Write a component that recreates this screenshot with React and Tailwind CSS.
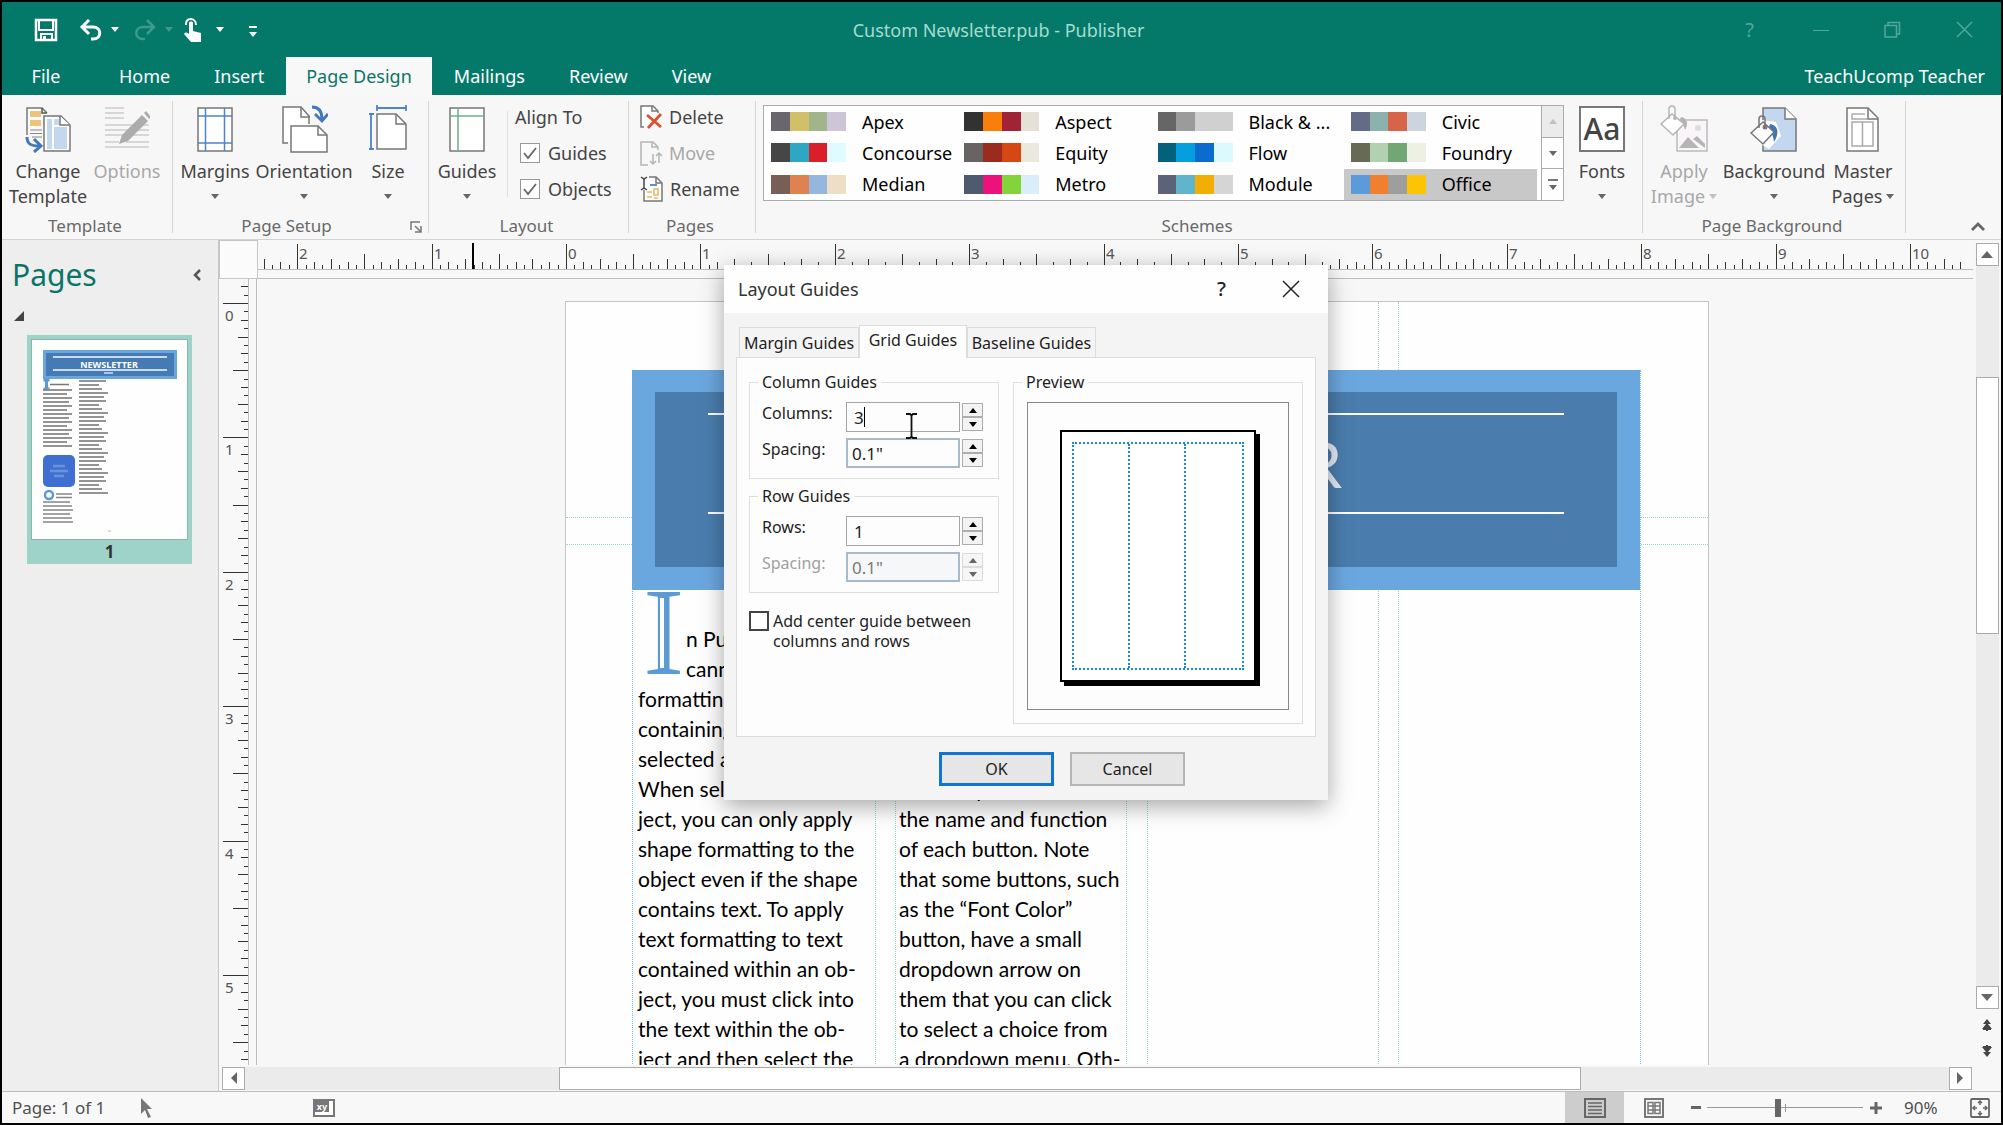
import React, { useState } from "react";
import clsx from "clsx";

const tabs = ["Home", "Insert", "Page Design", "Mailings", "Review", "View"];

const schemes = [
  { name: "Apex", colors: ["#69676d", "#d1c069", "#a2b489", "#cec5d8"] },
  { name: "Aspect", colors: ["#323232", "#f97f0a", "#a12436", "#e6e1d6"] },
  { name: "Black & ...", colors: ["#666666", "#9b9b9b", "#d0d0d0", "#d0d0d0"] },
  { name: "Civic", colors: ["#646b86", "#8cb2ae", "#d56448", "#ccd4df"] },
  { name: "Concourse", colors: ["#464646", "#2da7c4", "#da1f2b", "#defbff"] },
  { name: "Equity", colors: ["#696464", "#9a2b1e", "#d54816", "#ebe8de"] },
  { name: "Flow", colors: ["#04617b", "#049fdf", "#0c6bce", "#dcfafd"] },
  { name: "Foundry", colors: ["#676a55", "#b1d1b1", "#72a674", "#eef0e4"] },
  { name: "Median", colors: ["#775f55", "#e08250", "#94b6df", "#ecdfc6"] },
  { name: "Metro", colors: ["#4e5b6f", "#ed127b", "#82d43a", "#daeef9"] },
  { name: "Module", colors: ["#5a6378", "#60b5cd", "#f2ae05", "#d5d5d5"] },
  { name: "Office", colors: ["#5b9bd9", "#f08030", "#9e9e9e", "#fcc404"] },
];

const columnOne = [
  "formatting to",
  "containing all",
  "selected and",
  "When select an ob-",
  "ject, you can only apply",
  "shape formatting to the",
  "object even if the shape",
  "contains text. To apply",
  "text formatting to text",
  "contained within an ob-",
  "ject, you must click into",
  "the text within the ob-",
  "ject and then select the",
];

const columnTwo = [
  "ScreenTip with",
  "the name and function",
  "of each button. Note",
  "that some buttons, such",
  "as the “Font Color”",
  "button, have a small",
  "dropdown arrow on",
  "them that you can click",
  "to select a choice from",
  "a dropdown menu. Oth-",
];

function Caret({ className }) {
  return (
    <svg viewBox="0 0 8 5" className={clsx("w-2 h-[5px] shrink-0", className)}>
      <path d="M0 0H8L4 5Z" fill="currentColor" />
    </svg>
  );
}

function Svg({ w, h, children, className }) {
  return (
    <svg
      width={w}
      height={h}
      viewBox={`0 0 ${w} ${h}`}
      fill="none"
      className={clsx("shrink-0", className)}
    >
      {children}
    </svg>
  );
}

/* Ribbon icons */

const ChangeTemplateIcon = () => (
  <Svg w={46} h={48}>
    <path d="M2 30V3h15l5 5" stroke="#777" strokeWidth="1.5" fill="#fff" />
    <path d="M17 3v5h5" stroke="#555" strokeWidth="1.5" />
    <path d="M5 6h11v6H5zM5 15h11v6H5z" fill="#eec27c" />
    <path d="M5 25h12M5 28.500h12M7 32h10" stroke="#888" strokeWidth="1.2" />
    <path d="M19 11h17l9 9v26H19z" fill="#fff" stroke="#777" strokeWidth="1.5" />
    <path d="M22 14h5v30h-5z" fill="#c3d7ee" />
    <path d="M29 14h5v6h-5zM29 22h13v22H29z" fill="#c3d7ee" />
    <path d="M35 11v9h10" fill="#fff" stroke="#777" strokeWidth="1.500" />
    <path d="M2 32c0 7 4 9 12 9M9 34l7 7-7 6" stroke="#4478bd" strokeWidth="3" />
  </Svg>
);

const OptionsIcon = () => (
  <Svg w={46} h={48}>
    <path
      d="M1 3h19M1 8h19M1 13h19M1 20h28M33 20h12M1 25h23M30 25h15M1 30h18M26 30h19M1 37h14M22 37h23M1 42h44"
      stroke="#ccc"
      strokeWidth="1.5"
    />
    <path d="M15 39l3-9 20-20 6 6-20 20z" fill="#acacac" />
    <path d="M40 8l2-2 5 6-2 2z" fill="#acacac" />
  </Svg>
);

const MarginsIcon = () => (
  <Svg w={38} h={48}>
    <rect x="2" y="3" width="34" height="43" fill="#fff" stroke="#777" strokeWidth="1.5" />
    <path d="M9.500 3v43M28.500 3v43M2 11h34M2 38h34" stroke="#4d84c9" strokeWidth="1.500" />
  </Svg>
);

const OrientationIcon = () => (
  <Svg w={48} h={48}>
    <path d="M8 38H3V2h18l8 9v8" fill="#fff" stroke="#777" strokeWidth="1.5" />
    <path d="M21 2v10h9" stroke="#777" strokeWidth="1.5" />
    <path d="M11 21h27l9 9v17H11z" fill="#fff" stroke="#777" strokeWidth="1.5" />
    <path d="M38 21v9h9" stroke="#777" strokeWidth="1.5" />
    <path d="M32 2c7 0 10 4 10 12M35 9l7 7 6-7" stroke="#4478bd" strokeWidth="2.800" />
  </Svg>
);

const SizeIcon = () => (
  <Svg w={40} h={48}>
    <path d="M9 9h19l10 10v25H9z" fill="#fff" stroke="#777" strokeWidth="1.500" />
    <path d="M28 9v10h10" stroke="#777" strokeWidth="1.5" />
    <path d="M9 3h29M9 0v6M38 0v6M3 9v35M1 9h5M1 44h5" stroke="#4d84c9" strokeWidth="1.800" />
  </Svg>
);

const GuidesIcon = () => (
  <Svg w={38} h={48}>
    <rect x="2" y="3" width="34" height="43" fill="#fff" stroke="#777" strokeWidth="1.5" />
    <path d="M10 3v43M2 11h34" stroke="#6fae8d" strokeWidth="1.5" />
  </Svg>
);

const FontsIcon = () => (
  <span className="w-[46px] h-[46px] border-2 border-[#777] bg-white flex items-center justify-center text-[30px] leading-none font-medium text-[#444]">
    Aa
  </span>
);

const ApplyImageIcon = () => (
  <Svg w={48} h={48}>
    <rect x="17" y="15" width="30" height="31" fill="#f9f5f9" stroke="#bbb" strokeWidth="1.5" />
    <path d="M19 43l9-11 11 11zM33 34l4-3 8 8v4z" fill="#b5b5b5" />
    <circle cx="38" cy="23" r="3" fill="#ddd" />
    <path d="M21 12c6 1 8 7 4 13-1-4-2-6-6-8z" fill="#b5b5b5" />
    <path d="M1 19L12 9l12 10-11 11z" fill="#fff" stroke="#b5b5b5" strokeWidth="1.500" />
    <path d="M9 14V4c0-4 6-4 6 0v8" stroke="#b5b5b5" strokeWidth="1.5" />
    <circle cx="15" cy="13" r="2" fill="#b5b5b5" />
  </Svg>
);

const BackgroundIcon = () => (
  <Svg w={48} h={48}>
    <path d="M13 3h22l11 11v32H13z" fill="#c3d7ee" stroke="#777" strokeWidth="1.5" />
    <path d="M35 3v11h11" fill="#fff" stroke="#777" strokeWidth="1.5" />
    <path d="M12 15l14 2 5 14-12 13-10-6z" fill="#fff" />
    <path d="M20 19c8 1 10 9 4 18-1-7-2-10-6-12z" fill="#3f74b9" />
    <path d="M1 28l12-11 11 10-11 12z" fill="#fff" stroke="#777" strokeWidth="1.5" />
    <path d="M9 23v-9c0-4 6-4 6 0v8" stroke="#777" strokeWidth="1.5" />
    <circle cx="15" cy="22" r="2.500" fill="#777" />
  </Svg>
);

const MasterPagesIcon = () => (
  <Svg w={36} h={48}>
    <path d="M2 3h21l10 10v33H2z" fill="#fff" stroke="#777" strokeWidth="1.5" />
    <path d="M23 3v11h10" stroke="#777" strokeWidth="1.5" />
    <path d="M7 9h13M7 9v5h16M7 17h21v24H7zM17.500 17v24" stroke="#aaa" strokeWidth="1.500" />
  </Svg>
);

const DeleteIcon = () => (
  <Svg w={23} h={26}>
    <path d="M4 23H1V2h12l5 5v2" fill="#fff" stroke="#777" strokeWidth="1.5" />
    <path d="M12 2v5h6" stroke="#777" strokeWidth="1.5" />
    <path d="M7 11l14 12M21 10L8 24" stroke="#d8532f" strokeWidth="2.800" />
  </Svg>
);

const MoveIcon = () => (
  <Svg w={23} h={26}>
    <path d="M8 25H1V2h12l5 5v3" stroke="#b5b5b5" strokeWidth="1.5" />
    <path d="M12 2v5h6M13 14v10M10 21l3 3 3-3M19 23V13M16 16l3-3 3 3" stroke="#b5b5b5" strokeWidth="1.500" />
  </Svg>
);

const RenameIcon = () => (
  <Svg w={24} h={26}>
    <path d="M4 14v11h18V7l-6-6H9" fill="#fff" stroke="#777" strokeWidth="1.5" />
    <path d="M16 1v6h6" stroke="#777" strokeWidth="1.5" />
    <path d="M1 1l3 2 3-2M4 3v9M1 14l3-2 3 2" stroke="#444" strokeWidth="1.500" />
    <path d="M10 9h7" stroke="#4d84c9" strokeWidth="1.8" />
    <path d="M7 16h5M14 13h4v6h-4zM7 21h5M14 22h4" stroke="#e9b566" strokeWidth="1.500" />
  </Svg>
);

function BigButton({ icon, label, second, caret, disabled, className }) {
  return (
    <button
      disabled={disabled}
      className={clsx(
        "flex flex-col items-center shrink-0 text-[18px] leading-[25px]",
        disabled ? "text-[#a8a8a8]" : "text-[#444]",
        className
      )}
    >
      <span className="h-12 mb-1.5 flex items-center">{icon}</span>
      <span>{label}</span>
      <span className="h-[25px] flex items-center gap-1">
        {second}
        {caret && <Caret className={disabled ? "text-[#c0c0c0]" : "text-[#666]"} />}
      </span>
    </button>
  );
}

function Group({ label, launcher, className, bodyClass, children }) {
  return (
    <div className={clsx("relative flex flex-col text-[18px]", className)}>
      <div className={clsx("flex-1 flex items-start", bodyClass)}>{children}</div>
      <div
        className={clsx(
          "h-[26px] flex items-center justify-center text-[17px] leading-6 text-[#6a6a6a]",
          launcher ? "pr-7" : "pr-1"
        )}
      >
        {label}
      </div>
      {launcher && (
        <button aria-label="Page Setup options" className="absolute right-1.5 bottom-1.5">
          <Svg w={12} h={12}>
            <path d="M1 9V1h9M5 5l5 5M11 5v6H5" stroke="#777" strokeWidth="1.5" />
          </Svg>
        </button>
      )}
    </div>
  );
}

const Divider = () => <div className="w-px my-1.5 bg-[#d5d5d5] shrink-0" />;

function RibbonCheck({ label }) {
  const [on, setOn] = useState(true);
  return (
    <label className="h-9 pl-[5px] flex items-center gap-2">
      <span className="relative w-5 h-5 flex">
        <input
          type="checkbox"
          checked={on}
          onChange={() => setOn(!on)}
          className="appearance-none w-5 h-5 border border-[#999] bg-white"
        />
        {on && (
          <Svg w={20} h={20} className="absolute inset-0 pointer-events-none">
            <path d="M4 10l4 5 8-10" stroke="#666" strokeWidth="1.800" />
          </Svg>
        )}
      </span>
      {label}
    </label>
  );
}

function SchemeGallery() {
  const [selected, setSelected] = useState("Office");
  return (
    <div className="flex-1 h-24 flex border border-[#ababab] bg-[#fefefe]">
      <div className="flex-1 grid grid-cols-4 grid-rows-3 pr-1">
        {schemes.map((scheme) => (
          <button
            key={scheme.name}
            onClick={() => setSelected(scheme.name)}
            className={clsx(
              "flex items-center gap-4 pl-[7px] text-[18px] leading-6 text-black whitespace-nowrap",
              selected === scheme.name && "bg-[#c8c8c8]"
            )}
          >
            <span className="flex w-[75px] h-[19px] shrink-0">
              {scheme.colors.map((color, i) => (
                <span key={i} className="flex-1" style={{ backgroundColor: color }} />
              ))}
            </span>
            {scheme.name}
          </button>
        ))}
      </div>
      <div className="w-[22px] flex flex-col border-l border-[#ababab] divide-y divide-[#ababab] text-[#666]">
        <button aria-label="Previous row" className="flex-1 flex items-center justify-center bg-[#ebebeb] text-[#c0c0c0]">
          <Caret className="rotate-180" />
        </button>
        <button aria-label="Next row" className="flex-1 flex items-center justify-center">
          <Caret />
        </button>
        <button aria-label="More schemes" className="flex-1 flex flex-col items-center justify-center gap-1">
          <span className="w-[10px] h-0.5 bg-[#777]" />
          <Caret />
        </button>
      </div>
    </div>
  );
}

function TitleBar() {
  return (
    <header className="bg-[#047969] text-white shrink-0">
      <div className="h-[55px] flex items-center">
        <div className="flex-1 flex items-center pl-[32px]">
          <button aria-label="Save">
            <Svg w={24} h={24}>
              <path d="M2 2h20v20H2z" stroke="#fff" strokeWidth="2.500" />
              <path d="M5 3v9h14V3M7 22v-6h11v6" stroke="#fff" strokeWidth="2" />
              <path d="M9 18h3v4H9z" fill="#fff" />
            </Svg>
          </button>
          <button aria-label="Undo" className="ml-[21px] flex items-center gap-2">
            <Svg w={24} h={22}>
              <path d="M3 8h11c9 0 9 12 0 12h-2M10 1L3 8l7 7" stroke="#fff" strokeWidth="3" />
            </Svg>
            <Caret />
          </button>
          <button aria-label="Redo" disabled className="ml-[14px] flex items-center gap-2 text-[#3d9a8c]">
            <Svg w={24} h={22}>
              <path d="M21 8H10c-9 0-9 12 0 12h2M14 1l7 7-7 7" stroke="#3d9a8c" strokeWidth="2.500" />
            </Svg>
            <Caret />
          </button>
          <button aria-label="Touch mode" className="ml-[10px] flex items-center gap-[13px]">
            <Svg w={20} h={26}>
              <path d="M3 8c-1-8 10-8 10 0" stroke="#fff" strokeWidth="2" />
              <path d="M6 6c0-2 4-2 4 0v8l8 2v9H8l-7-8c1-2 3-2 5 0z" fill="#fff" />
            </Svg>
            <Caret />
          </button>
          <button aria-label="Customize toolbar" className="ml-[25px] mt-1 flex flex-col items-center gap-1">
            <span className="w-2 h-0.5 bg-white" />
            <Caret />
          </button>
        </div>
        <h1 className="pr-2.5 text-[18px] leading-6 text-[#a5dcd0]">Custom Newsletter.pub - Publisher</h1>
        <div className="flex-1 flex items-center justify-end gap-[55px] pr-[28px] text-[#4fa99b]">
          <button aria-label="Help" className="mr-1 text-[20px] leading-6">?</button>
          <button aria-label="Minimize">
            <Svg w={16} h={16}><path d="M0 8.500h16" stroke="currentColor" /></Svg>
          </button>
          <button aria-label="Restore">
            <Svg w={17} h={17}>
              <path d="M1 4.500h11.500v11.500H1zM4 4V1.500h11.500V13H13" stroke="currentColor" strokeWidth="1.500" />
            </Svg>
          </button>
          <button aria-label="Close">
            <Svg w={17} h={17}>
              <path d="M1 1l15 15M16 1L1 16" stroke="currentColor" strokeWidth="1.5" />
            </Svg>
          </button>
        </div>
      </div>
      <nav className="h-[38px] flex text-[18px] leading-[38px]">
        <button className="w-[95px] pr-[7px]">File</button>
        {tabs.map((tab) => (
          <button
            key={tab}
            className={tab === "Page Design" ? "px-5 bg-[#f8f8f8] text-[#0a7566]" : "px-[22px]"}
          >
            {tab}
          </button>
        ))}
        <a href="#account" className="ml-auto pr-4">TeachUcomp Teacher</a>
      </nav>
    </header>
  );
}

function Ribbon() {
  return (
    <div className="h-36 shrink-0 bg-[#f7f7f7] flex">
      <Group label="Template" className="w-[170px]" bodyClass="pt-2.5 pl-[3px]">
        <BigButton icon={<ChangeTemplateIcon />} label="Change" second="Template" className="w-[86px]" />
        <BigButton icon={<OptionsIcon />} label="Options" disabled className="w-[72px]" />
      </Group>
      <Divider />
      <Group label="Page Setup" launcher className="w-[255px]" bodyClass="pt-2.5 pl-[3px]">
        <BigButton icon={<MarginsIcon />} label="Margins" caret className="w-[78px]" />
        <BigButton icon={<OrientationIcon />} label="Orientation" caret className="w-[100px]" />
        <BigButton icon={<SizeIcon />} label="Size" caret className="w-[68px]" />
      </Group>
      <Divider />
      <Group label="Layout" className="w-[199px]" bodyClass="pl-[3px]">
        <BigButton icon={<GuidesIcon />} label="Guides" caret className="w-[70px] pt-2.5" />
        <div className="w-px h-[86px] mt-4 ml-[5px] mr-[7px] bg-[#e0e0e0]" />
        <div className="pt-1 text-[#444] leading-6">
          <div className="h-9 flex items-center">Align To</div>
          <RibbonCheck label="Guides" />
          <RibbonCheck label="Objects" />
        </div>
      </Group>
      <Divider />
      <Group label="Pages" className="w-[126px]" bodyClass="pl-[11px] pt-1">
        <div className="text-[#444] leading-6">
          <button className="h-9 flex items-center gap-1.5"><DeleteIcon />Delete</button>
          <button disabled className="h-9 flex items-center gap-1.5 text-[#a8a8a8]"><MoveIcon />Move</button>
          <button className="h-9 flex items-center gap-1.5"><RenameIcon />Rename</button>
        </div>
      </Group>
      <Divider />
      <Group label="Schemes" className="flex-1" bodyClass="pt-2.5 pl-[7px]">
        <SchemeGallery />
        <BigButton icon={<FontsIcon />} label="Fonts" caret className="w-[76px] mr-0.5" />
      </Group>
      <Divider />
      <Group label="Page Background" className="w-[262px]" bodyClass="pt-2.5 pl-0.5">
        <BigButton icon={<ApplyImageIcon />} label="Apply" second="Image" caret disabled className="w-[78px]" />
        <BigButton icon={<BackgroundIcon />} label="Background" caret className="w-[102px]" />
        <BigButton icon={<MasterPagesIcon />} label="Master" second="Pages" caret className="w-[76px]" />
      </Group>
      <Divider />
      <div className="w-[95px] flex items-end justify-end pr-4 pb-2">
        <button aria-label="Collapse ribbon">
          <Svg w={14} h={9}>
            <path d="M1 8l6-6 6 6" stroke="#666" strokeWidth="2.800" />
          </Svg>
        </button>
      </div>
    </div>
  );
}

/* Miniature of the newsletter page shown in the Pages pane */
function PageThumbnail() {
  const left = [];
  for (let y = 50; y < 110; y += 4) left.push(y);
  const right = [];
  for (let y = 41; y < 154; y += 4) right.push(y);
  const tail = [];
  for (let y = 162; y < 185; y += 4) tail.push(y);
  return (
    <svg viewBox="0 0 155 199" className="w-full bg-[#fefefe] block">
      <rect x="11" y="10" width="134" height="29" fill="#6ba5de" />
      <rect x="14" y="13" width="128" height="23" fill="#457ab5" />
      <path d="M21 17h114M21 30h114" stroke="#c9dbf0" strokeWidth="2" />
      <text x="77" y="28" textAnchor="middle" fontSize="9" fontWeight="700" fill="#fff">
        NEWSLETTER
      </text>
      <path d="M72 33h9" stroke="#a9c8ea" strokeWidth="2" />
      <path d="M14.500 40v9M11.500 40h6M11.500 49h6" stroke="#5b9bd5" strokeWidth="3" />
      <path d="M18 44.500h19" stroke="#777" strokeWidth="1.5" />
      {left.map((y, i) => (
        <path key={y} d={`M11 ${y}h${[29, 24, 29, 26][i % 4]}`} stroke="#888" strokeWidth="1.800" />
      ))}
      {right.map((y, i) => (
        <path key={y} d={`M47 ${y}h${[27, 20, 23, 29, 25][i % 5]}`} stroke="#888" strokeWidth="1.800" />
      ))}
      <rect x="11" y="115" width="32" height="32" rx="5" fill="#3f6fd0" />
      <path d="M21 126h12M18 131h18M22 136h10" stroke="#6c92de" strokeWidth="2.500" />
      <circle cx="17" cy="155" r="4" stroke="#5b9bd5" strokeWidth="2.500" fill="none" />
      <path d="M24 154h16M24 157.500h16" stroke="#888" strokeWidth="1.500" />
      {tail.map((y, i) => (
        <path key={y} d={`M11 ${y}h${[27, 29, 30][i % 3]}`} stroke="#999" strokeWidth="1.800" />
      ))}
      <path d="M76 191h3" stroke="#bbb" />
    </svg>
  );
}

function PagesPane() {
  return (
    <aside className="w-[217px] shrink-0 bg-[#eeeeee] border-r border-[#c6c6c6] pl-2.5 pr-4">
      <div className="h-[70px] flex items-center justify-between">
        <h2 className="text-[30px] leading-10 text-[#0a7566]">Pages</h2>
        <button aria-label="Collapse pane">
          <Svg w={9} h={12}>
            <path d="M7 1L2 6l5 5" stroke="#555" strokeWidth="2.500" />
          </Svg>
        </button>
      </div>
      <Svg w={12} h={12} className="ml-px">
        <path d="M11 1v10H1z" fill="#444" />
      </Svg>
      <button className="block mt-[13px] ml-[15px] w-[165px] bg-[#9ed3ca] p-1 pb-0 text-[17px] leading-6 font-bold text-[#333]">
        <span className="block border border-[#8bb5ae]">
          <PageThumbnail />
        </span>
        1
      </button>
    </aside>
  );
}

/* 1 inch is 134.4px on screen at the current zoom */
const STEP = 8.4;

function tickLength(i, lengths) {
  if (i % 16 === 0) return lengths[0];
  if (i % 8 === 0) return lengths[1];
  if (i % 4 === 0) return lengths[2];
  return i % 2 === 0 ? lengths[3] : lengths[4];
}

function HorizontalRuler() {
  const ticks = [];
  for (let i = -36; i <= 166; i++) ticks.push(i);
  return (
    <div className="flex-1 min-w-0 flex flex-col bg-[#f8f8f8] border-b border-[#bdbdbd]">
      <div className="h-[30px] overflow-hidden border-b border-[#bdbdbd]">
        <svg width="2000" height="30" shapeRendering="crispEdges">
          {ticks.map((i) => {
            const x = Math.round(308 + i * STEP);
            const len = tickLength(i, [26, 16, 11, 8, 5]);
            return (
              <g key={i}>
                <rect x={x} y={30 - len} width={1} height={len} fill="#333" />
                {i % 16 === 0 && (
                  <text x={x + 2} y={19} fontSize="15" fill="#555">
                    {Math.abs(i / 16)}
                  </text>
                )}
              </g>
            );
          })}
          <rect x="214" y="3" width="2" height="27" fill="#000" />
        </svg>
      </div>
    </div>
  );
}

function VerticalRuler() {
  const ticks = [];
  for (let i = -2; i <= 90; i++) ticks.push(i);
  return (
    <div className="w-[38px] shrink-0 flex bg-[#f8f8f8] border-r border-[#bdbdbd]">
      <div className="w-[30px] overflow-hidden border-r border-[#bdbdbd]">
        <svg width="29" height="1600" shapeRendering="crispEdges">
          {ticks.map((i) => {
            const y = Math.round(24 + i * STEP);
            const len = tickLength(i, [25, 15, 10, 7, 4]);
            return (
              <g key={i}>
                <rect x={29 - len} y={y} width={len} height={1} fill="#333" />
                {i % 16 === 0 && (
                  <text x="6" y={y + 18} fontSize="15" fill="#555">
                    {i / 16}
                  </text>
                )}
              </g>
            );
          })}
        </svg>
      </div>
    </div>
  );
}

function Canvas() {
  return (
    <div className="flex-1 min-w-0 relative overflow-hidden bg-[#f7f7f7]">
      <article className="absolute left-[308px] top-[22px] w-[1144px] h-[1480px] bg-[#fefefe] border border-[#c4c4c4] font-[Lato,sans-serif]">
        {/* layout guides */}
        <div className="absolute inset-x-0 top-[215px] h-[28px] border-y border-dotted border-[#8fdcc0]" />
        <div className="absolute left-[812px] top-0 bottom-0 w-[21px] border-x border-dotted border-[#8fdcc0]" />
        <div className="absolute left-[309px] top-[288px] bottom-0 w-[21px] border-x border-dotted border-[#8fdcc0]" />
        <div className="absolute left-[560px] top-[288px] bottom-0 w-[22px] border-x border-dotted border-[#8fdcc0]" />
        <div className="absolute left-[66px] top-[68px] bottom-0 w-[1009px] border-x border-dotted border-[#6db8e8]" />

        <div className="absolute left-[66px] top-[68px] w-[1008px] h-[220px] bg-[#6ba7df] pt-[22px] pb-[23px] px-[23px]">
          <div className="h-full bg-[#4a7dae] px-[53px] pt-[21px] pb-[53px]">
            <div className="h-full border-y-2 border-white flex items-center justify-end pr-[222px] text-[64px] leading-none text-[#e3ebf3]">
              NEWSLETTER
            </div>
          </div>
        </div>

        <div className="absolute left-[72px] top-[322px] w-[236px] text-[21px] leading-[30px] text-black whitespace-nowrap">
          <div className="flex">
            <span className="w-[48px] h-[60px] flex items-end">
              <span className="pl-[5px] text-[124px] leading-[102px] font-[Liberation_Serif,serif] text-transparent bg-clip-text bg-no-repeat bg-[linear-gradient(#fefefe,#fefefe),linear-gradient(#5b9bd5,#5b9bd5)] bg-[size:4px_70px,100%_100%] bg-[position:22px_16px,0_0]">
                I
              </span>
            </span>
            <p>
              n Publisher
              <br />
              cannot use
            </p>
          </div>
          {columnOne.map((line) => (
            <p key={line}>{line}</p>
          ))}
        </div>
        <div className="absolute left-[333px] top-[472px] w-[236px] text-[21px] leading-[30px] text-black whitespace-nowrap">
          {columnTwo.map((line) => (
            <p key={line}>{line}</p>
          ))}
        </div>
      </article>
    </div>
  );
}

const scrollButton =
  "w-[23px] h-[23px] shrink-0 flex items-center justify-center bg-white border border-[#ababab] text-[#666]";

function HorizontalScroll() {
  return (
    <div className="h-[26px] shrink-0 flex items-center pl-[3px] pr-px bg-[#f7f7f7]">
      <button aria-label="Scroll left" className={scrollButton}>
        <Svg w={7} h={12}><path d="M7 0v12L1 6z" fill="currentColor" /></Svg>
      </button>
      <div className="flex-1 flex h-[23px] bg-[#ebebeb]">
        <div className="w-[18.4%]" />
        <div className="w-[60%] bg-white border border-[#ababab]" />
      </div>
      <button aria-label="Scroll right" className={scrollButton}>
        <Svg w={7} h={12}><path d="M0 0v12l6-6z" fill="currentColor" /></Svg>
      </button>
    </div>
  );
}

function VerticalScroll() {
  return (
    <div className="w-[28px] shrink-0 flex flex-col items-center pt-[3px] pb-[34px] bg-[#f7f7f7]">
      <button aria-label="Scroll up" className={scrollButton}>
        <Svg w={12} h={7}><path d="M0 7h12L6 0z" fill="currentColor" /></Svg>
      </button>
      <div className="flex-1 w-[23px] flex flex-col bg-[#ebebeb]">
        <div className="h-[15.4%]" />
        <div className="h-[35.7%] bg-white border border-[#ababab]" />
      </div>
      <button aria-label="Scroll down" className={scrollButton}>
        <Svg w={12} h={7}><path d="M0 0h12L6 7z" fill="currentColor" /></Svg>
      </button>
      <button aria-label="Previous page" className="mt-[10px]">
        <Svg w={10} h={12}><path d="M5 0l4 5H6l4 5H6v2H4v-2H0l4-5H1zM1 10h8v1H1z" fill="#444" /></Svg>
      </button>
      <button aria-label="Next page" className="mt-[14px]">
        <Svg w={10} h={12}><path d="M5 12L1 7h3L0 2h4V0h2v2h4L6 7h3zM1 1h8v1H1z" fill="#444" /></Svg>
      </button>
    </div>
  );
}

function StatusBar() {
  const [zoom, setZoom] = useState(45);
  return (
    <footer className="h-8 shrink-0 flex items-center border-t border-[#bdbdbd] bg-[#f8f8f8] pl-2.5 text-[17px] leading-6 text-[#505050]">
      <span className="w-[128px]">Page: 1 of 1</span>
      <Svg w={13} h={20}>
        <path d="M1 0v16l4-4 3 8 3-1-4-8h5z" fill="#777" />
      </Svg>
      <span className="ml-[160px] w-[22px] h-[18px] border-2 border-[#777] bg-white flex items-start">
        <span className="w-[14px] h-[11px] bg-[#777] text-white text-[9px] leading-[11px] font-bold text-center">xy</span>
      </span>
      <div className="ml-auto h-full flex items-center">
        <button aria-label="Single page" className="w-[59px] h-full flex items-center justify-center bg-[#cdcdcd]">
          <Svg w={22} h={20}>
            <path d="M1 1h20v18H1z" stroke="#666" strokeWidth="2" />
            <path d="M4 5h14M4 8.500h14M4 12h14M4 15.500h14" stroke="#666" strokeWidth="1.500" />
          </Svg>
        </button>
        <button aria-label="Two-page spread" className="w-[59px] h-full flex items-center justify-center">
          <Svg w={20} h={20}>
            <path d="M1 1h18v18H1z" stroke="#777" strokeWidth="2" />
            <path d="M4 4.500h5v11H4zM11 4.500h5v11h-5zM4 8h12M4 12h12" stroke="#777" strokeWidth="1.500" />
          </Svg>
        </button>
        <button aria-label="Zoom out" className="ml-[8px] w-2.5 h-[3px] bg-[#666]" />
        <label className="relative ml-[6px] w-[156px] h-5 flex items-center">
          <span className="sr-only">Zoom</span>
          <span className="absolute left-1/2 h-2 w-px bg-[#999]" />
          <input
            type="range"
            value={zoom}
            onChange={(e) => setZoom(Number(e.target.value))}
            className="relative w-full h-px bg-[#999] appearance-none [&::-webkit-slider-thumb]:appearance-none [&::-webkit-slider-thumb]:w-1.5 [&::-webkit-slider-thumb]:h-[18px] [&::-webkit-slider-thumb]:bg-[#666]"
          />
        </label>
        <button aria-label="Zoom in" className="ml-[7px]">
          <Svg w={12} h={12}><path d="M0 6h12M6 0v12" stroke="#666" strokeWidth="3" /></Svg>
        </button>
        <span className="ml-[22px] w-[66px]">90%</span>
        <button aria-label="Fit page" className="mr-[11px]">
          <Svg w={20} h={20}>
            <rect x="1" y="1" width="18" height="18" rx="1" stroke="#666" strokeWidth="1.800" />
            <path d="M10 3v4M10 13v4M3 10h4M13 10h4M8 5l2-2 2 2M8 15l2 2 2-2M5 8l-2 2 2 2M15 8l2 2-2 2" stroke="#666" strokeWidth="1.500" />
          </Svg>
        </button>
      </div>
    </footer>
  );
}

function SpinField({ id, label, value, onChange, blue, caret, disabled }) {
  const step = (delta) => onChange(String(Math.max(1, (parseInt(value) || 0) + delta)));
  const spin = clsx(
    "w-[21px] h-[14px] flex items-center justify-center border",
    disabled ? "border-[#dcdcdc] bg-[#f6f6f6] text-[#666]" : "border-[#adadad] bg-[#f3f3f3] text-black"
  );
  return (
    <div className="flex items-center h-[30px]">
      <label htmlFor={id} className={clsx("w-[84px] pb-2 leading-5", disabled && "text-[#a0a0a0]")}>
        {label}
      </label>
      <div className="relative flex items-center">
        <input
          id={id}
          value={value}
          disabled={disabled}
          onChange={(e) => onChange(e.target.value)}
          className={clsx(
            "w-[114px] h-[30px] outline-none text-[17px] leading-6",
            blue ? "border-2 border-[#a9bacb] pl-1" : "border border-[#a5a5a5] pl-[7px]",
            disabled ? "bg-[#f5f7f9] text-[#7a7a7a]" : "bg-[#fdfdfd] text-[#222]"
          )}
        />
        {caret && <span className="absolute left-[18px] h-5 w-px bg-black" />}
      </div>
      <div className="ml-0.5 flex flex-col">
        <button aria-label={`${label} up`} disabled={disabled} onClick={() => step(1)} className={spin}>
          <Caret className="rotate-180" />
        </button>
        <button aria-label={`${label} down`} disabled={disabled} onClick={() => step(-1)} className={spin}>
          <Caret />
        </button>
      </div>
    </div>
  );
}

function Fieldset({ legend, className, children }) {
  return (
    <fieldset className={clsx("border border-[#dedede]", className)}>
      <legend className="ml-2 px-1 h-5 leading-5">{legend}</legend>
      {children}
    </fieldset>
  );
}

function LayoutGuidesDialog() {
  const [columns, setColumns] = useState("3");
  const [columnSpacing, setColumnSpacing] = useState('0.1"');
  const [rows, setRows] = useState("1");
  return (
    <section
      role="dialog"
      aria-label="Layout Guides"
      className="absolute left-[722px] top-[263px] w-[604px] bg-[#f4f4f4] text-[16px] text-[#1e1e1e] shadow-[0_6px_22px_rgba(0,0,0,0.35)]"
    >
      <div className="h-12 bg-[#fefefe] flex items-center pl-3.5 pr-[28px]">
        <h2 className="flex-1 text-[18px] leading-6 text-[#333]">Layout Guides</h2>
        <button aria-label="Help" className="mr-[56px] text-[20px] leading-6 font-medium">?</button>
        <button aria-label="Close">
          <Svg w={18} h={18}>
            <path d="M1 1l16 16M17 1L1 17" stroke="#222" strokeWidth="1.500" />
          </Svg>
        </button>
      </div>
      <div className="pt-[11px] px-3 pb-3.5">
        <div role="tablist" className="flex items-end pl-[3px] h-[33px] leading-6">
          <button role="tab" className="w-[120px] h-[30px] border border-b-0 border-[#dcdcdc]">Margin Guides</button>
          <button role="tab" aria-selected="true" className="relative w-[108px] h-[33px] pb-1 -mb-px border border-b-0 border-[#dcdcdc] bg-[#fdfdfd]">
            Grid Guides
          </button>
          <button role="tab" className="w-[129px] h-[30px] border border-b-0 border-[#dcdcdc]">Baseline Guides</button>
        </div>
        <div className="h-[380px] bg-[#fdfdfd] border border-[#dcdcdc] pl-3 pr-3 pt-[14px] flex justify-between">
          <div className="w-[250px]">
            <Fieldset legend="Column Guides" className="h-[107px]">
              <div className="pl-3 pt-[10px] flex flex-col gap-1.5">
                <SpinField id="columns" label="Columns:" value={columns} onChange={setColumns} caret />
                <SpinField id="column-spacing" label="Spacing:" value={columnSpacing} onChange={setColumnSpacing} blue />
              </div>
            </Fieldset>
            <Fieldset legend="Row Guides" className="mt-[7px] h-[107px]">
              <div className="pl-3 pt-[10px] flex flex-col gap-1.5">
                <SpinField id="rows" label="Rows:" value={rows} onChange={setRows} />
                <SpinField id="row-spacing" label="Spacing:" value={'0.1"'} onChange={() => {}} blue disabled />
              </div>
            </Fieldset>
            <label className="mt-[18px] flex items-start gap-1 leading-5 whitespace-nowrap">
              <input type="checkbox" className="appearance-none w-5 h-5 border-2 border-[#444] bg-white" />
              <span>
                Add center guide between
                <br />
                columns and rows
              </span>
            </label>
          </div>
          <Fieldset legend="Preview" className="w-[290px] h-[352px]">
            <div className="mx-[13px] mt-[10px] h-[308px] border border-[#888] flex items-center justify-center">
              <div className="w-[196px] h-[252px] p-2.5 bg-white border-2 border-black shadow-[4px_4px_0_#000]">
                <div className="h-full grid grid-cols-3 border-2 border-dotted border-[#1a86e0] divide-x-2 divide-dotted divide-[#1a86e0]">
                  <div />
                  <div />
                  <div />
                </div>
              </div>
            </div>
          </Fieldset>
        </div>
        <div className="mt-[15px] pl-[203px] flex gap-4">
          <button className="w-[115px] h-[34px] border-[3px] border-[#0f75d1] bg-[#e6e6e6]">OK</button>
          <button className="w-[115px] h-[34px] border-2 border-[#b5b5b5] bg-[#e6e6e6]">Cancel</button>
        </div>
      </div>
      <Svg w={11} h={26} className="absolute left-[182px] top-[148px] pointer-events-none">
        <path d="M0 1h4l1.500 1.500L7 1h4M5.500 2v22M0 25h4l1.500-1.500L7 25h4" stroke="#111" strokeWidth="1.800" />
      </Svg>
    </section>
  );
}

export default function App() {
  return (
    <div className="relative h-screen flex flex-col overflow-hidden border-2 border-black bg-[#f7f7f7] font-[Noto_Sans,sans-serif]">
      <TitleBar />
      <Ribbon />
      <div className="flex-1 min-h-0 flex border-t border-[#d2d2d2]">
        <PagesPane />
        <main className="flex-1 min-w-0 flex flex-col">
          <div className="h-[39px] shrink-0 flex">
            <div className="w-[39px] shrink-0 border border-[#c6c6c6] bg-[#fbfbfb]" />
            <HorizontalRuler />
          </div>
          <div className="flex-1 min-h-0 flex">
            <VerticalRuler />
            <Canvas />
          </div>
          <HorizontalScroll />
        </main>
        <VerticalScroll />
      </div>
      <StatusBar />
      <LayoutGuidesDialog />
    </div>
  );
}
